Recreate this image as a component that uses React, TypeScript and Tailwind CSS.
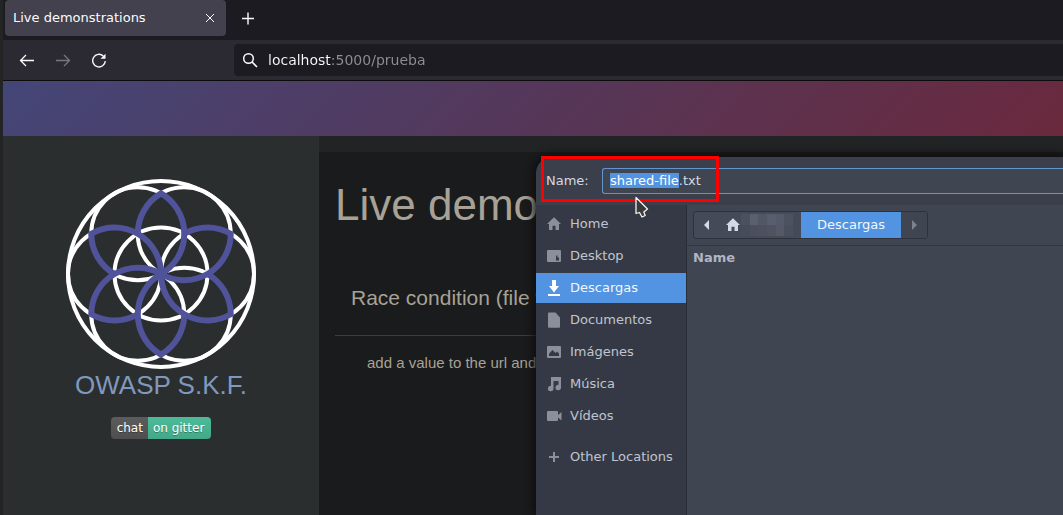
import { useEffect, useRef } from "react";
import type { ReactNode } from "react";

const R = 46.5;
const ANGLES = [0, 60, 120, 180, 240, 300];

function at(cx: number, cy: number, deg: number) {
  const a = (deg * Math.PI) / 180;
  return [cx + R * Math.cos(a), cy - R * Math.sin(a)] as const;
}

function SeedLogo() {
  return (
    <svg viewBox="-95 -95 190 190" className="size-[190px]" fill="none" role="img" aria-label="OWASP S.K.F.">
      <g stroke="#ffffff" strokeWidth="4">
        <circle r="93" />
        <circle r={R} />
        {ANGLES.map((t) => {
          const [cx, cy] = at(0, 0, t);
          return <circle key={t} cx={cx} cy={cy} r={R} />;
        })}
      </g>
      <g stroke="#50529a" strokeWidth="6" strokeLinejoin="miter">
        {ANGLES.map((t) => {
          const [cx, cy] = at(0, 0, t);
          const [nx, ny] = at(0, 0, t + 60);
          const tip = at(cx, cy, t + 60);
          return (
            <path
              key={t}
              d={`M${nx} ${ny}A${R} ${R} 0 0 1 ${tip[0]} ${tip[1]}A${R} ${R} 0 0 1 0 0`}
            />
          );
        })}
      </g>
    </svg>
  );
}

function Icon({ children, className = "" }: { children: ReactNode; className?: string }) {
  return (
    <svg viewBox="0 0 16 16" className={`size-4 shrink-0 ${className}`} fill="currentColor" aria-hidden="true">
      {children}
    </svg>
  );
}

const house = <path d="M8 1.2 15 8h-2v6H9.500V9.800H6.500V14H3V8H1Z" />;

const places: { name: string; icon: ReactNode; active?: boolean }[] = [
  { name: "Home", icon: house },
  {
    name: "Desktop",
    icon: <path fillRule="evenodd" d="M2 2h12a1 1 0 0 1 1 1v10a1 1 0 0 1-1 1H2a1 1 0 0 1-1-1V3a1 1 0 0 1 1-1Zm8 5.500v5h3V9.500h-1.500v-2Z" />,
  },
  { name: "Descargas", icon: <path d="M6 0h4v6h3L8 12.500 3 6h3ZM2 14h12v2H2Z" />, active: true },
  { name: "Documentos", icon: <path d="M2 1.500A1 1 0 0 1 3 .5h6.500l4.500 5V15a.8.8 0 0 1-.8.800H3a1 1 0 0 1-1-1Z" /> },
  {
    name: "Imágenes",
    icon: <path fillRule="evenodd" d="M2 2h12a1 1 0 0 1 1 1v10a1 1 0 0 1-1 1H2a1 1 0 0 1-1-1V3a1 1 0 0 1 1-1Zm1 10h10V9.500L11 7.500 9.500 9 6.500 6 3 9.800Z" />,
  },
  {
    name: "Música",
    icon: <path d="M5 1h10v10.500a2.800 2.800 0 1 1-2.500-2.800V5H7.500v7.500A2.800 2.800 0 1 1 5 9.700Z" />,
  },
  { name: "Vídeos", icon: <path d="M1 4a1 1 0 0 1 1-1h9a1 1 0 0 1 1 1v3l3.500-3v8.500L12 9.500V12a1 1 0 0 1-1 1H2a1 1 0 0 1-1-1Z" /> },
];

function Place({ name, icon, active }: { name: string; icon: ReactNode; active?: boolean }) {
  return (
    <button
      type="button"
      className={`flex h-[30px] w-full items-center gap-2 pl-[10px] text-left ${
        active ? "bg-[#5294e2] text-[#f2f6fc]" : "text-[#c0c5d0]"
      }`}
    >
      <Icon className={active ? "text-white" : "text-[#8b8f9b]"}>{icon}</Icon>
      {name}
    </button>
  );
}

const mosaic = [
  "bg-[#4d515e]", "bg-[#5b5f6e]", "bg-[#535765]", "bg-[#5a5d6d]", "bg-[#565a68]", "bg-[#4e5260]",
  "bg-[#484c59]", "bg-[#4b4f5c]", "bg-[#4d515e]", "bg-[#4f5361]", "bg-[#555967]", "bg-[#4b4f5c]",
];

function SaveDialog() {
  const fileInput = useRef<HTMLInputElement>(null);
  useEffect(() => {
    fileInput.current?.focus();
    fileInput.current?.setSelectionRange(0, 11);
  }, []);

  return (
    <section
      aria-label="Save file"
      className="absolute top-[157px] right-0 bottom-0 left-[536px] flex flex-col overflow-hidden rounded-tl-[16px] bg-[#3b3e4b] text-[13px] shadow-[0_0_10px_2px_#0c0c0d]"
    >
      <div className="flex h-12 shrink-0 items-center pl-[10px]">
        <label htmlFor="filename" className="w-14 text-[#d3dae3]">
          Name:
        </label>
        <input
          id="filename"
          ref={fileInput}
          defaultValue="shared-file.txt"
          spellCheck={false}
          className="h-[26px] min-w-0 flex-1 rounded-l-[3px] border border-r-0 border-[#6294ce] bg-[#404552] px-[7px] pb-[2px] leading-[17px] text-[#d3dae3] outline-none selection:bg-[#5294e2] selection:text-white"
        />
      </div>
      <div className="flex flex-1">
        <nav className="flex w-[151px] shrink-0 flex-col gap-[2px] border-r border-[#2b2e39] bg-[#353945] pt-1">
          {places.map((p) => (
            <Place key={p.name} {...p} />
          ))}
          <div className="pt-[9px]">
            <Place name="Other Locations" icon={<path d="M7 3h2v4h4v2H9v4H7V9H3V7h4Z" />} />
          </div>
        </nav>
        <div className="flex-1 bg-[#404552]">
          <div className="flex h-[41px] items-center border-b border-[#333743] pl-[6px]">
            <div className="flex h-7 items-stretch rounded-[3px] border border-[#2e323d] bg-[#444a58]">
              <button type="button" aria-label="Back" className="flex w-[26px] items-center justify-center text-[#d3dae3]">
                <Icon>
                  <path d="M10 3v10L5 8Z" />
                </Icon>
              </button>
              <button type="button" aria-label="Home folder" className="flex w-[81px] items-center pl-[5px] text-[#d3dae3]">
                <Icon>{house}</Icon>
                <span className="grid w-[52px] grid-cols-6 grid-rows-2">
                  {mosaic.map((c, i) => (
                    <span key={i} className={`h-[11px] ${c}`} />
                  ))}
                </span>
              </button>
              <button type="button" className="w-[100px] bg-[#5294e2] text-[#f2f6fc]">
                Descargas
              </button>
              <button type="button" aria-label="Forward" className="flex w-[26px] items-center justify-center bg-[#404552] text-[#7d828e]">
                <Icon>
                  <path d="M6 3v10l5-5Z" />
                </Icon>
              </button>
            </div>
          </div>
          <div className="px-[6px] py-[2px] font-bold text-[#afb5c2]">Name</div>
        </div>
      </div>
    </section>
  );
}

export default function App() {
  return (
    <div className="relative flex min-h-screen overflow-hidden bg-[#232425] pl-[3px] font-['DejaVu_Sans',sans-serif]">
      <div className="flex min-w-0 flex-1 flex-col">
        <div className="flex h-10 shrink-0 items-start bg-[#1c1b22] pl-[2px] text-[#fbfbfe]">
          <div className="flex h-9 w-[221px] items-center justify-between rounded-[4px] bg-[#42414d] px-2">
            <button type="button" className="text-[13px]">
              Live demonstrations
            </button>
            <button type="button" aria-label="Close tab">
              <Icon>
                <path d="m4 4 8 8m0-8-8 8" stroke="currentColor" strokeWidth="1" />
              </Icon>
            </button>
          </div>
          <button type="button" aria-label="New tab" className="flex h-9 w-11 items-center justify-center">
            <Icon>
              <path d="M8 2.500v12M2 8.500h12" stroke="currentColor" strokeWidth="1.400" />
            </Icon>
          </button>
        </div>

        <div className="flex h-[41px] shrink-0 items-center border-b border-[#0c0c0d] bg-[#2b2a33] pl-4 text-[#fbfbfe]">
          <div className="flex w-[215px] gap-5">
            <button type="button" aria-label="Back">
              <Icon>
                <path d="M15 8.500H1.500M7 3 1.500 8.500 7 14" fill="none" stroke="currentColor" strokeWidth="1.300" />
              </Icon>
            </button>
            <button type="button" aria-label="Forward" className="text-[#77767f]">
              <Icon>
                <path d="M1 8.500h13.500M9 3l5.500 5.500L9 14" fill="none" stroke="currentColor" strokeWidth="1.300" />
              </Icon>
            </button>
            <button type="button" aria-label="Reload">
              <Icon>
                <path d="M12.300 4A6.300 6.300 0 1 0 14.300 9" fill="none" stroke="currentColor" strokeWidth="1.400" />
                <path d="M14.500 1.800v4.500a.5.500 0 0 1-.5.500H9.500Z" />
              </Icon>
            </button>
          </div>
          <div className="flex h-8 flex-1 items-center gap-[10px] rounded-l-[4px] bg-[#1c1b22] pl-2">
            <Icon>
              <path d="m10 10 5 5" stroke="currentColor" strokeWidth="1.600" />
              <circle cx="6.500" cy="6.500" r="4.800" fill="none" stroke="currentColor" strokeWidth="1.500" />
            </Icon>
            <input
              aria-label="Address"
              defaultValue="localhost:5000/prueba"
              spellCheck={false}
              className="min-w-0 flex-1 bg-[linear-gradient(to_right,#fbfbfe_63px,#8f8e97_63px)] bg-clip-text text-sm text-transparent outline-none"
            />
          </div>
        </div>

        <header className="h-[55px] shrink-0 bg-[linear-gradient(135deg,#444678,#553759_50%,#6a293d)]" />

        <div className="flex flex-1 font-['Liberation_Sans',sans-serif]">
          <aside className="flex w-[316px] shrink-0 flex-col items-center bg-[#2a2e2f] pt-[43px]">
            <SeedLogo />
            <p className="text-[26px] leading-8 text-[#8098be]">OWASP S.K.F.</p>
            <a
              href="#gitter"
              className="mt-4 flex h-[22px] overflow-hidden rounded-[4px] font-['DejaVu_Sans',sans-serif] text-xs leading-[22px] text-white [text-shadow:0_1px_0_#0000004d]"
            >
              <span className="bg-linear-to-b from-[#5c5c5c] to-[#4e4e4e] pr-[5px] pl-[6px]">chat</span>
              <span className="bg-linear-to-b from-[#4cbb98] to-[#43a888] pr-[7px] pl-[5px]">on gitter</span>
            </a>
          </aside>
          <main className="min-w-0 flex-1 bg-[#212324] pt-4">
            <div className="h-full bg-[#1a1b1c] px-4 pt-7 text-[#a8a296]">
              <h1 className="text-[44px] leading-[50px] whitespace-nowrap">Live demo</h1>
              <h2 className="mt-14 border-b border-[#3a3d3e] px-4 pb-[25px] text-[21px] leading-6 whitespace-nowrap">
                Race condition (file w
              </h2>
              <p className="mt-[17px] px-8 text-[15px] leading-5 whitespace-nowrap">add a value to the url and</p>
            </div>
          </main>
        </div>
      </div>

      <SaveDialog />

      <div className="pointer-events-none absolute top-[156px] left-[541px] h-[46px] w-[178px] border-[3px] border-[#fe0000]" />
      <svg viewBox="0 0 16 24" className="pointer-events-none absolute top-[196px] left-[634px] h-6 w-4" aria-hidden="true">
        <path d="M2 1.500V17.500L5.500 16.500 8 21 11.200 19.500 9.800 16 13.500 13Z" fill="#3a3a3a" stroke="#f4f4f4" strokeWidth="1.300" strokeLinejoin="round" />
      </svg>
    </div>
  );
}
